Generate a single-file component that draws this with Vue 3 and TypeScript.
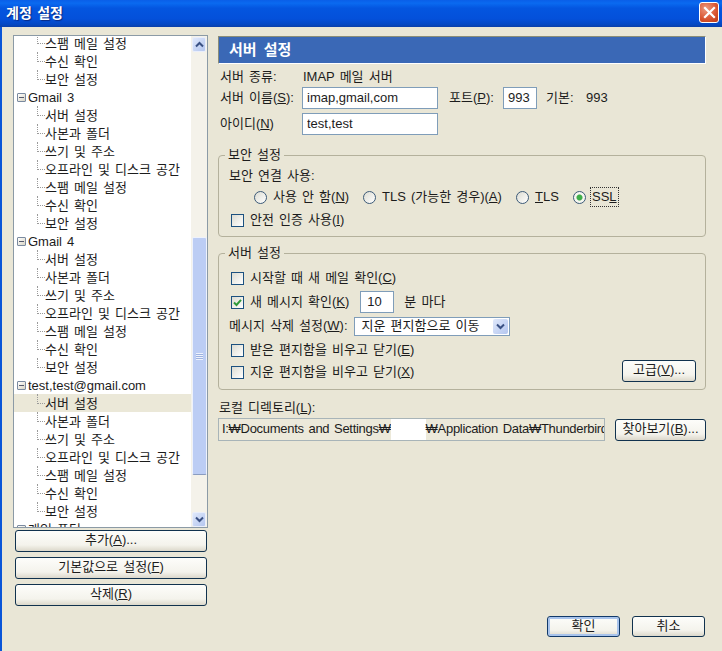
<script setup lang="ts">
interface TreeRow { label: string; kind: 'account' | 'child'; selected?: boolean }
const children = ['서버 설정', '사본과 폴더', '쓰기 및 주소', '오프라인 및 디스크 공간', '스팸 메일 설정', '수신 확인', '보안 설정']
const acct = (name: string, selectedIdx = -1): TreeRow[] => [
  { label: name, kind: 'account' },
  ...children.map((c, i) => ({ label: c, kind: 'child' as const, selected: i === selectedIdx })),
]
const rows: TreeRow[] = [
  ...children.slice(4).map((c) => ({ label: c, kind: 'child' as const })),
  ...acct('Gmail 3'),
  ...acct('Gmail 4'),
  ...acct('test,test@gmail.com', 0),
  { label: '개인 폴더', kind: 'account' },
]
</script>

<template>
  <div class="window">
    <header class="titlebar">
      <span class="title">계정 설정</span>
      <button class="close" aria-label="닫기">
        <svg width="13" height="13" viewBox="0 0 13 13"><path d="M2 2 L11 11 M11 2 L2 11" stroke="#fff" stroke-width="2.2" stroke-linecap="square" fill="none" /></svg>
      </button>
    </header>
    <div class="content">
      <aside class="left">
        <div class="tree">
          <div class="tree-list">
            <div v-for="(r, i) in rows" :key="i" class="row" :class="[r.kind, { selected: r.selected }]">
              <span v-if="r.kind === 'account'" class="expander"></span>
              <span class="row-label">{{ r.label }}</span>
            </div>
          </div>
          <div class="scrollbar">
            <div class="sb-btn">
              <svg width="9" height="7" viewBox="0 0 9 7"><path d="M1 5.5 L4.5 2 L8 5.5" stroke="#3a5184" stroke-width="2" fill="none" /></svg>
            </div>
            <div class="sb-track">
              <div class="sb-thumb"><span class="grip"></span></div>
            </div>
            <div class="sb-btn">
              <svg width="9" height="7" viewBox="0 0 9 7"><path d="M1 1.5 L4.5 5 L8 1.5" stroke="#3a5184" stroke-width="2" fill="none" /></svg>
            </div>
          </div>
        </div>
        <div class="left-buttons">
          <button class="btn">추가(<u>A</u>)...</button>
          <button class="btn">기본값으로 설정(<u>F</u>)</button>
          <button class="btn">삭제(<u>R</u>)</button>
        </div>
      </aside>

      <main class="right">
        <div class="banner">서버 설정</div>

        <div class="form-row type-row">
          <span class="lbl">서버 종류:</span><span>IMAP 메일 서버</span>
        </div>
        <div class="form-row name-row">
          <span class="lbl">서버 이름(<u>S</u>):</span>
          <input class="field wide" value="imap,gmail,com" />
          <span class="port-lbl">포트(<u>P</u>):</span>
          <input class="field port" value="993" />
          <span class="def-lbl">기본:</span><span>993</span>
        </div>
        <div class="form-row id-row">
          <span class="lbl">아이디(<u>N</u>)</span>
          <input class="field wide" value="test,test" />
        </div>

        <fieldset class="group sec-group">
          <legend>보안 설정</legend>
          <div class="g-line use-line">보안 연결 사용:</div>
          <div class="g-line radios">
            <label class="radio r1"><span class="dot"></span><span>사용 안 함(<u>N</u>)</span></label>
            <label class="radio r2"><span class="dot"></span><span>TLS (가능한 경우)(<u>A</u>)</span></label>
            <label class="radio r3"><span class="dot"></span><span><u>T</u>LS</span></label>
            <label class="radio"><span class="dot on"></span><span class="focus">SS<u>L</u></span></label>
          </div>
          <label class="g-line check-line auth-line"><span class="box"></span><span>안전 인증 사용(<u>I</u>)</span></label>
        </fieldset>

        <fieldset class="group srv-group">
          <legend>서버 설정</legend>
          <label class="g-line check-line first-line"><span class="box"></span><span>시작할 때 새 메일 확인(<u>C</u>)</span></label>
          <div class="g-line check-line">
            <span class="box">
              <svg width="9" height="9" viewBox="0 0 9 9"><path d="M1 4.5 L3.5 7 L8 1.8" stroke="#2f9a3a" stroke-width="2" fill="none" /></svg>
            </span>
            <span>새 메시지 확인(<u>K</u>)</span>
            <input class="field mins" value="10" />
            <span class="mins-lbl">분 마다</span>
          </div>
          <div class="g-line del-line">
            <span>메시지 삭제 설정(<u>W</u>):</span>
            <div class="select">
              <span>지운 편지함으로 이동</span>
              <span class="sel-arrow">
                <svg width="9" height="7" viewBox="0 0 9 7"><path d="M1 1.5 L4.5 5 L8 1.5" stroke="#3a5184" stroke-width="2" fill="none" /></svg>
              </span>
            </div>
          </div>
          <label class="g-line check-line"><span class="box"></span><span>받은 편지함을 비우고 닫기(<u>E</u>)</span></label>
          <div class="g-line check-line last-line">
            <span class="box"></span><span>지운 편지함을 비우고 닫기(<u>X</u>)</span>
            <button class="btn adv">고급(<u>V</u>)...</button>
          </div>
        </fieldset>

        <div class="dir-label">로컬 디렉토리(<u>L</u>):</div>
        <div class="dir-row">
          <div class="dir-field">
            <span class="dir-text">I:₩Documents and Settings₩<span class="mask"></span>₩Application Data₩Thunderbird</span>
          </div>
          <button class="btn browse">찾아보기(<u>B</u>)...</button>
        </div>

        <div class="actions">
          <button class="btn ok">확인</button>
          <button class="btn">취소</button>
        </div>
      </main>
    </div>
  </div>
</template>

<style>
html, body { margin: 0; padding: 0; background: #e9e6d6; }
</style>

<style scoped>
.window {
  width: 722px;
  height: 651px;
  overflow: hidden;
  display: flex;
  flex-direction: column;
  background: #e9e6d6;
  color: #1c1c1c;
  font-family: "Liberation Sans", "Noto Sans CJK KR", sans-serif;
  font-size: 13px;
  line-height: 18px;
  word-spacing: 1.5px;
}
u { text-underline-offset: 1px; }
.titlebar {
  height: 27px;
  flex: none;
  display: flex;
  align-items: center;
  justify-content: space-between;
  padding: 0 3px 2px 6px;
  box-sizing: border-box;
  background: linear-gradient(180deg, #0a5fe8 0%, #0a6af0 12%, #0456e0 30%, #0450da 70%, #0448c4 90%, #0a3fa8 100%);
}
.title {
  color: #fff;
  font-weight: 700;
  font-size: 14px;
  text-shadow: 1px 1px 1px #0a2a80;
}
.close {
  width: 20px;
  height: 21px;
  padding: 0;
  display: flex;
  align-items: center;
  justify-content: center;
  border: 1px solid #fff;
  border-radius: 3px;
  background: radial-gradient(circle at 35% 30%, #ee9a80, #d8532f 60%, #bb3a16);
}
.content {
  flex: 1;
  display: flex;
  border-left: 2px solid #0a55d8;
  padding: 8px 0 0 11px;
  min-height: 0;
}
.left { width: 195px; flex: none; }
.tree {
  height: 493px;
  box-sizing: border-box;
  display: flex;
  border: 1px solid #8b9aa6;
  background: #fff;
}
.tree-list {
  flex: 1;
  min-width: 0;
  overflow: hidden;
}
.row {
  height: 18px;
  box-sizing: border-box;
  padding-top: 1px;
  position: relative;
  display: flex;
  align-items: center;
  white-space: nowrap;
  flex: none;
}
.tree-list .row:first-child { margin-top: -2px; }
.row.child { padding-left: 31px; }
.row.child::before {
  content: "";
  position: absolute;
  left: 23px;
  top: 0;
  width: 7px;
  height: 9px;
  border-left: 1px dotted #9a9a9a;
  border-bottom: 1px dotted #9a9a9a;
}
.row.selected { background: #ebe8d8; }
.row.account { padding-left: 3px; }
.expander {
  width: 9px;
  height: 9px;
  box-sizing: border-box;
  border: 1px solid #7a8aa0;
  border-radius: 1px;
  margin-right: 2px;
  flex: none;
  background: linear-gradient(#54596c, #54596c) center / 5px 1px no-repeat, linear-gradient(135deg, #fff, #d8d4c4);
}
.scrollbar {
  width: 16px;
  flex: none;
  display: flex;
  flex-direction: column;
  background: #f4f2ea;
  padding: 1px 0 0;
  box-sizing: border-box;
}
.sb-btn {
  height: 15px;
  width: 14px;
  margin-left: 1px;
  flex: none;
  display: flex;
  align-items: center;
  justify-content: center;
  border-radius: 2px;
  background: linear-gradient(135deg, #dfe8fb, #b4c6ef);
  border: 1px solid #e9eefb;
  box-sizing: border-box;
}
.sb-track {
  flex: 1;
  padding-top: 185px;
  padding-bottom: 37px;
  display: flex;
}
.sb-thumb {
  flex: 1;
  margin: 0 0 0 1px;
  width: 14px;
  box-sizing: border-box;
  border: 1px solid #eef2fc;
  border-bottom: 1px solid #8a9cc0;
  border-radius: 2px;
  background: #bccdf4;
  display: flex;
  align-items: center;
  justify-content: center;
}
.grip {
  width: 7px;
  height: 7px;
  background: repeating-linear-gradient(180deg, #eef2fc 0 1px, #9db2e0 1px 2px);
}
.left-buttons {
  display: flex;
  flex-direction: column;
  gap: 5px;
  margin: 2px 1px 0 2px;
}
.btn {
  height: 22px;
  padding: 0 0 2px;
  box-sizing: border-box;
  font: inherit;
  line-height: 18px;
  word-spacing: inherit;
  color: #1c1c1c;
  border: 1px solid #11324e;
  border-radius: 3px;
  background: linear-gradient(180deg, #fdfdfa 0%, #f4f3ec 70%, #dcd8cb 100%);
}
.right {
  width: 488px;
  margin-left: 10px;
  flex: none;
  display: flex;
  flex-direction: column;
}
.banner {
  height: 28px;
  margin-top: 1px;
  box-sizing: border-box;
  padding-left: 10px;
  display: flex;
  align-items: center;
  background: #3a68b6;
  color: #fff;
  font-weight: 700;
  font-size: 15px;
  word-spacing: 3px;
  border-top: 1px solid #8a8d78;
  border-left: 1px solid #8a8d78;
  border-right: 1px solid #fff;
  border-bottom: 1px solid #fff;
}
.form-row { display: flex; align-items: center; padding-left: 2px; white-space: nowrap; }
.lbl { width: 82px; flex: none; }
.lbl + span { margin-left: 1px; }
.type-row { margin-top: 4px; height: 18px; }
.name-row { margin-top: 1px; height: 22px; }
.id-row { margin-top: 4px; height: 22px; }
.field {
  box-sizing: border-box;
  height: 22px;
  border: 1px solid #7f9db9;
  background: #fff;
  padding: 0 3px 1px 4px;
  font: inherit;
  word-spacing: inherit;
  color: #1c1c1c;
  outline: none;
}
.wide { width: 136px; }
.port-lbl { margin-left: 11px; width: 54px; }
.port { width: 34px; margin-right: 9px; }
.def-lbl { width: 40px; }
.group {
  margin: 0;
  padding: 0;
  min-width: 0;
  box-sizing: border-box;
  border: 1px solid #b4b19c;
  border-radius: 4px;
}
.group legend {
  margin-left: 6px;
  padding: 0 3px;
  line-height: 18px;
}
.sec-group { margin-top: 11px; height: 91px; }
.srv-group { margin-top: 7px; height: 146px; }
.g-line { height: 18px; display: flex; align-items: center; white-space: nowrap; padding-left: 10px; }
.use-line { margin-top: 3px; }
.radios { margin-top: 3px; padding-left: 35px; }
.radio { display: flex; align-items: center; gap: 6px; }
.r1 { width: 109px; }
.r2 { width: 153px; }
.r3 { width: 57px; }
.dot {
  width: 13px;
  height: 13px;
  box-sizing: border-box;
  flex: none;
  border: 1px solid #3c5a78;
  border-radius: 50%;
  background: linear-gradient(135deg, #dcdcd2, #fff);
}
.dot.on {
  background: radial-gradient(circle, #3fae4a 0 2.5px, #f6f6f0 3.5px);
}
.focus { outline: 1px dotted #333; outline-offset: 0; padding: 0 1px; margin-left: -1px; }
.check-line { gap: 6px; padding-left: 12px; }
.auth-line { margin-top: 5px; }
.box {
  width: 13px;
  height: 13px;
  box-sizing: border-box;
  flex: none;
  border: 1px solid #1c5180;
  background: linear-gradient(135deg, #dcdcd2, #fff);
  display: flex;
  align-items: center;
  justify-content: center;
}
.srv-group .g-line { margin-top: 6px; }
.srv-group .first-line { margin-top: 7px; }
.srv-group .last-line { margin-top: 4px; }
.mins { width: 34px; margin-left: 5px; padding-left: 6px; }
.mins-lbl { margin-left: 4px; }
.del-line { gap: 6px; }
.select {
  width: 156px;
  height: 19px;
  box-sizing: border-box;
  border: 1px solid #7f9db9;
  background: #fff;
  display: flex;
  align-items: center;
  justify-content: space-between;
  padding: 0 1px 0 7px;
}
.sel-arrow {
  width: 15px;
  height: 15px;
  display: flex;
  align-items: center;
  justify-content: center;
  border-radius: 2px;
  background: linear-gradient(135deg, #dfe8fb, #b4c6ef);
}
.adv {
  margin-left: auto;
  margin-right: 9px;
  margin-bottom: 2px;
  width: 74px;
}
.dir-label { margin-top: 9px; padding-left: 1px; height: 18px; display: flex; align-items: center; white-space: pre; }
.dir-row { display: flex; align-items: flex-start; gap: 10px; margin-top: 1px; }
.dir-field {
  width: 387px;
  height: 23px;
  box-sizing: border-box;
  border: 1px solid #a8b4b8;
  background: #ece9da;
  overflow: hidden;
  white-space: nowrap;
  padding: 1px 0 0 3px;
}
.dir-text { letter-spacing: -0.3px; }
.mask {
  display: inline-block;
  width: 35px;
  height: 18px;
  vertical-align: top;
  background: #fff;
  box-shadow: 0 -3px 0 #fff, 0 3px 0 #fff;
}
.browse { width: 91px; margin-top: 1px; }
.actions {
  display: flex;
  justify-content: flex-end;
  gap: 12px;
  margin-top: 175px;
  padding-right: 1px;
}
.actions .btn { width: 73px; height: 21px; }
.ok {
  box-shadow: inset 0 0 0 2px #a9c4ec;
  border-color: #123a6a;
}
</style>
